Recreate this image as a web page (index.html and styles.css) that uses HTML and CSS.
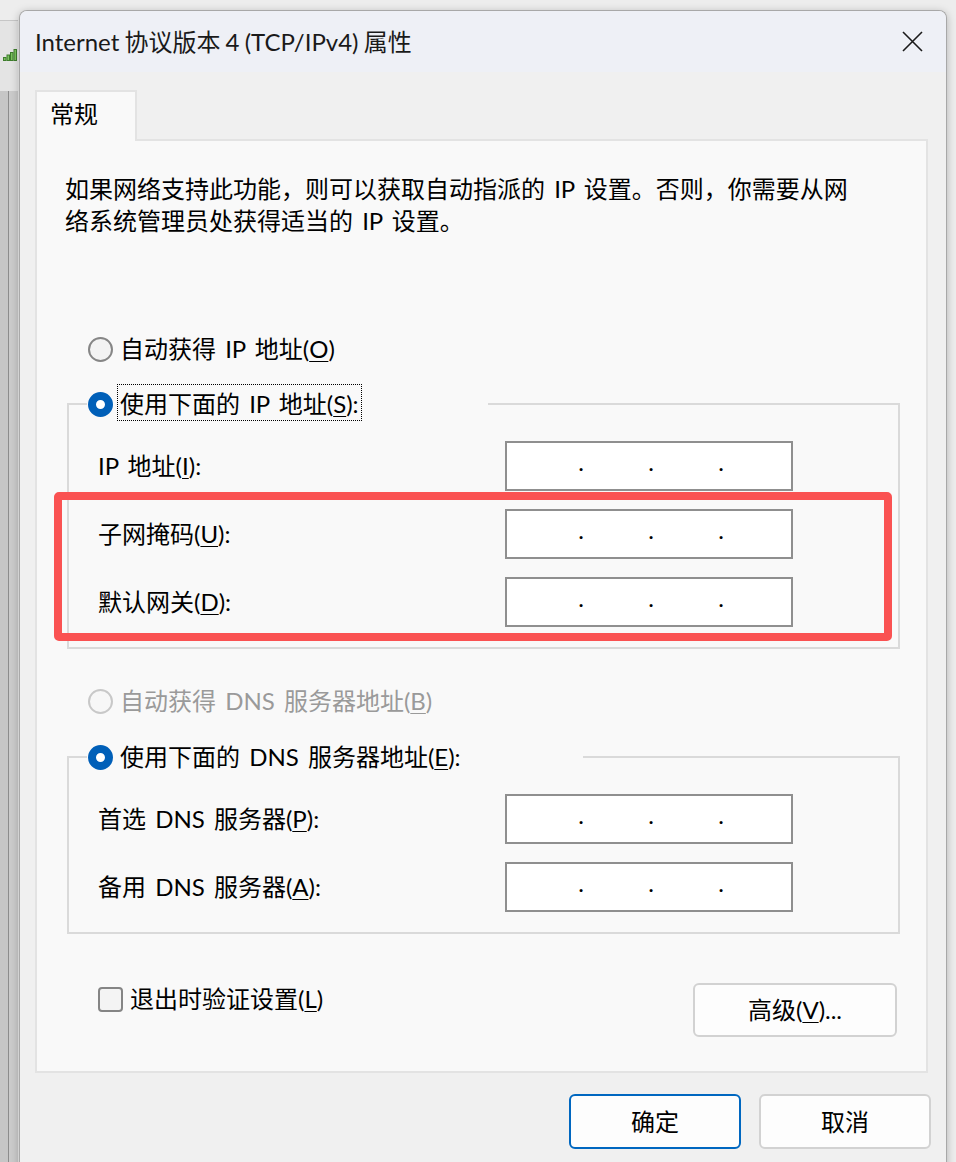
FILE: index.html
```html
<!DOCTYPE html>
<html lang="zh-CN">
<head>
<meta charset="utf-8">
<title>Internet 协议版本 4 (TCP/IPv4) 属性</title>
<link rel="stylesheet" href="styles.css">
</head>
<body>
<div class="desk">
  <div class="backwin">
    <svg class="signal" width="15" height="12" viewBox="0 0 15 12">
      <rect x="0.5" y="8.5" width="2.5" height="3" fill="#7cc35f" stroke="#3e7d2c" stroke-width="1"/>
      <rect x="4" y="6" width="2.5" height="5.5" fill="#7cc35f" stroke="#3e7d2c" stroke-width="1"/>
      <rect x="7.5" y="3.5" width="2.5" height="8" fill="#7cc35f" stroke="#3e7d2c" stroke-width="1"/>
      <rect x="11" y="0.5" width="2.5" height="11" fill="#7cc35f" stroke="#3e7d2c" stroke-width="1"/>
    </svg>
    <div class="backpane"></div>
  </div>

  <div class="dialog">
    <div class="titlebar">
      <span class="title">Internet 协议版本 4 (TCP/IPv4) 属性</span>
      <svg class="close" width="21" height="21" viewBox="0 0 21 21">
        <path d="M1 1 L20 20 M20 1 L1 20" stroke="#1a1a1a" stroke-width="1.6" fill="none"/>
      </svg>
    </div>
    <div class="body">
      <div class="tabs"><div class="tab">常规</div></div>
      <div class="panel">
        <p class="desc">如果网络支持此功能，则可以获取自动指派的 IP 设置。否则，你需要从网<br>络系统管理员处获得适当的 IP 设置。</p>

        <div class="radio-row r-auto-ip"><span class="radio"></span><span>自动获得 IP 地址(<u>O</u>)</span></div>

        <fieldset class="group g-ip">
          <legend class="legend l-ip"><span class="radio on"></span><span class="ltext"><span class="focus">使用下面的 IP 地址(<u>S</u>):</span></span></legend>
          <div class="rows">
            <label class="lbl">IP 地址(<u>I</u>):</label>
            <div class="ipbox"><span class="oct"></span><span class="dot">.</span><span class="oct"></span><span class="dot">.</span><span class="oct"></span><span class="dot">.</span><span class="oct"></span></div>
            <label class="lbl">子网掩码(<u>U</u>):</label>
            <div class="ipbox"><span class="oct"></span><span class="dot">.</span><span class="oct"></span><span class="dot">.</span><span class="oct"></span><span class="dot">.</span><span class="oct"></span></div>
            <label class="lbl">默认网关(<u>D</u>):</label>
            <div class="ipbox"><span class="oct"></span><span class="dot">.</span><span class="oct"></span><span class="dot">.</span><span class="oct"></span><span class="dot">.</span><span class="oct"></span></div>
          </div>
        </fieldset>

        <div class="radio-row r-auto-dns disabled"><span class="radio dis"></span><span>自动获得 DNS 服务器地址(<u>B</u>)</span></div>

        <fieldset class="group g-dns">
          <legend class="legend l-dns"><span class="radio on"></span><span class="ltext">使用下面的 DNS 服务器地址(<u>E</u>):</span></legend>
          <div class="rows">
            <label class="lbl">首选 DNS 服务器(<u>P</u>):</label>
            <div class="ipbox"><span class="oct"></span><span class="dot">.</span><span class="oct"></span><span class="dot">.</span><span class="oct"></span><span class="dot">.</span><span class="oct"></span></div>
            <label class="lbl">备用 DNS 服务器(<u>A</u>):</label>
            <div class="ipbox"><span class="oct"></span><span class="dot">.</span><span class="oct"></span><span class="dot">.</span><span class="oct"></span><span class="dot">.</span><span class="oct"></span></div>
          </div>
        </fieldset>

        <div class="bottom-row">
          <div class="check-row"><span class="checkbox"></span><span>退出时验证设置(<u>L</u>)</span></div>
          <button class="btn adv">高级(<u>V</u>)...</button>
        </div>
      </div>
      <div class="actions">
        <button class="btn act primary">确定</button>
        <button class="btn act">取消</button>
      </div>
    </div>
  </div>

  <div class="highlight"></div>
</div>
</body>
</html>
```

FILE: styles.css
```css
html, body {
  margin: 0;
  padding: 0;
}

body {
  background: #ececec;
  font-family: "Lato", "Noto Sans CJK SC", sans-serif;
  color: #000;
}

.desk {
  position: relative;
  width: 956px;
  height: 1162px;
  overflow: hidden;
  background: #ededed;
}

/* window behind the dialog */
.backwin {
  position: absolute;
  left: 0;
  top: 20px;
  width: 18px;
  bottom: 0;
  background: #e4e4e4;
  border-top: 1px solid #c6c6c6;
}

.signal {
  position: absolute;
  left: 3px;
  top: 28px;
}

.backpane {
  position: absolute;
  left: 0;
  top: 70px;
  width: 8px;
  bottom: 0;
  background: #c6c6c6;
  border-right: 1px solid #8c8c8c;
  box-shadow: 9px 0 0 #cbcbcb;
}

/* dialog */
.dialog {
  position: absolute;
  left: 19px;
  top: 10px;
  width: 928px;
  height: 1180px;
  box-sizing: border-box;
  border: 1px solid #a8a8a8;
  border-bottom: none;
  border-radius: 8px 8px 0 0;
  background: #f0f0f0;
  box-shadow: 0 2px 9px rgba(0, 0, 0, 0.25);
  overflow: hidden;
  display: flex;
  flex-direction: column;
}

.titlebar {
  height: 61px;
  flex: none;
  background: #eef0f6;
  display: flex;
  align-items: center;
  justify-content: space-between;
  padding: 0 23px 0 15px;
}

.title {
  font-size: 24px;
  line-height: 32px;
  color: #1a1a1a;
  word-spacing: -1px;
}

.close {
  display: block;
}

.body {
  padding: 18px 18px 0 15px;
}

.tabs {
  display: flex;
}

.tab {
  position: relative;
  z-index: 1;
  width: 102px;
  height: 51px;
  box-sizing: border-box;
  border: 2px solid #e3e3e3;
  border-bottom: none;
  background: #f9f9f9;
  margin-bottom: -2px;
  padding: 6px 0 0 13px;
  font-size: 24px;
  line-height: 32px;
}

.panel {
  border: 2px solid #e3e3e3;
  background: #f9f9f9;
  padding: 0 0 34px 0;
  font-size: 24px;
  line-height: 32px;
  word-spacing: 3px;
}

.desc {
  margin: 32px 0 0 28px;
  white-space: nowrap;
  font-size: 24px;
  line-height: 32px;
}

u {
  text-decoration-thickness: 1px;
  text-underline-offset: 3px;
}

.radio-row {
  display: flex;
  align-items: center;
  gap: 7px;
  height: 32px;
  margin-left: 51px;
  white-space: nowrap;
}

.r-auto-ip {
  margin-top: 96px;
}

.r-auto-dns {
  margin-top: 36px;
}

.disabled {
  color: #9a9a9a;
}

.radio {
  flex: none;
  width: 25px;
  height: 25px;
  box-sizing: border-box;
  border-radius: 50%;
  border: 2px solid #868686;
  background: #f3f3f3;
}

.radio.on {
  border: 8px solid #005fb8;
  background: #ffffff;
}

.radio.dis {
  border-color: #c8c8c8;
  background: #f7f7f7;
}

.group {
  margin: 23px 26px 0 30px;
  padding: 0;
  border: 2px solid #dadada;
  min-width: 0;
}

.g-dns {
  margin-top: 24px;
}

.legend {
  display: flex;
  align-items: center;
  gap: 7px;
  height: 32px;
  box-sizing: border-box;
  padding: 0 0 0 1px;
  margin-left: 18px;
  white-space: nowrap;
}

.l-ip {
  width: 401px;
}

.l-dns {
  width: 496px;
}

.ltext {
  line-height: 32px;
}

.focus {
  outline: 1px dotted #000;
  padding: 4px 2px 2px 2px;
  margin-left: -2px;
}

.rows {
  display: grid;
  grid-template-columns: 1fr 288px;
  row-gap: 18px;
  align-items: center;
  padding: 21px 105px 20px 29px;
}

.lbl {
  white-space: nowrap;
  line-height: 32px;
}

.ipbox {
  box-sizing: border-box;
  height: 50px;
  border: 2px solid #8f8f8f;
  background: #ffffff;
  display: flex;
  align-items: flex-start;
  padding-left: 5px;
}

.oct {
  width: 68px;
  flex: none;
}

.dot {
  width: 2px;
  flex: none;
  display: flex;
  justify-content: center;
  font-size: 24px;
  line-height: 38px;
}

.bottom-row {
  display: flex;
  justify-content: space-between;
  align-items: flex-start;
  margin: 49px 29px 0 61px;
}

.check-row {
  display: flex;
  align-items: center;
  gap: 7px;
  height: 32px;
  white-space: nowrap;
}

.checkbox {
  flex: none;
  width: 25px;
  height: 25px;
  box-sizing: border-box;
  border: 2px solid #858585;
  border-radius: 4px;
  background: #f4f4f4;
}

.btn {
  box-sizing: border-box;
  font-family: "Lato", "Noto Sans CJK SC", sans-serif;
  font-size: 24px;
  line-height: 32px;
  color: #000;
  background: #fdfdfd;
  border: 2px solid #d2d2d2;
  border-radius: 6px;
  padding: 0;
  margin: 0;
}

.adv {
  width: 204px;
  height: 54px;
}

.actions {
  display: flex;
  justify-content: flex-end;
  gap: 18px;
  margin: 21px -3px 0 0;
}

.act {
  width: 172px;
  height: 55px;
}

.primary {
  border-color: #0067c0;
}

/* red annotation frame */
.highlight {
  position: absolute;
  left: 54px;
  top: 492px;
  width: 838px;
  height: 149px;
  box-sizing: border-box;
  border: 8px solid #fa5252;
  border-radius: 5px;
}
```
